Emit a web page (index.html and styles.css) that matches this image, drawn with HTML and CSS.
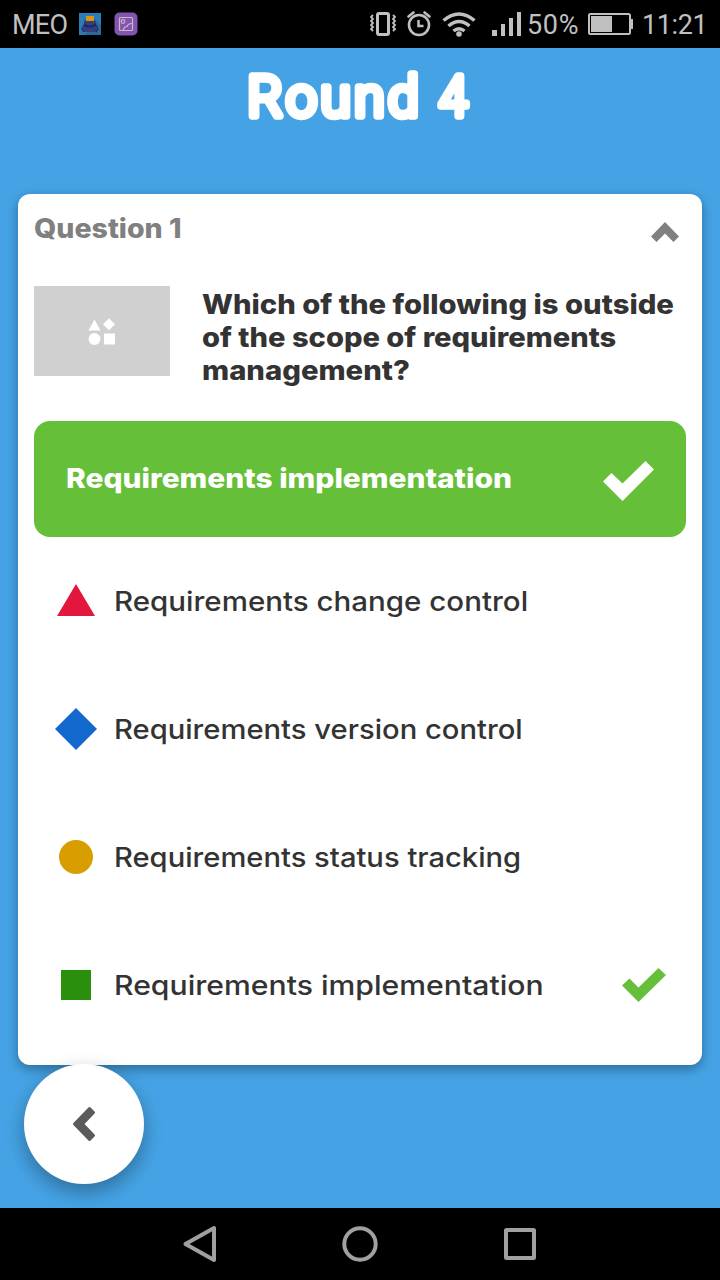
FILE: index.html
```html
<!DOCTYPE html>
<html lang="en">
<head>
<meta charset="utf-8">
<title>Round 4</title>
<link rel="stylesheet" href="styles.css">
</head>
<body>
<div class="phone">
  <header class="status-bar">
    <span class="carrier">MEO</span>
    <svg class="app-icon" width="22" height="22" viewBox="0 0 22 22"><path fill="#2b7db7" d="M0 0h22v22H0z"/><path fill="#286b9c" d="M17 7l5 5v10H6z"/><path fill="#343f7e" d="M5 10q0-5 6-5t6 5l1 9H4z"/><path fill="#d99612" d="M7 3h8v5H7z"/><path fill="#20285f" d="M5 10q6 5 12 0v3q-6 3-12 0z"/><path fill="none" stroke="#27306c" stroke-width="1.4" d="M5 12l-2 4 2 3m12-7 2 4-2 3"/></svg>
    <svg class="gallery-icon" width="24" height="24" viewBox="0 0 24 24"><rect x=".5" y=".5" width="23" height="23" rx="5" fill="#8455af"/><g fill="none" stroke="#c9b6cf" stroke-width="1.2"><rect x="5.500" y="5.500" width="13" height="13" rx="1"/><circle cx="9" cy="9.500" r="1.800"/><path d="M9 18.500q1-4 4-4 1-3 5-3"/></g></svg>
    <svg class="signals" width="152" height="32" viewBox="370 8 152 32" fill="none" stroke="#c0c0c0">
      <rect x="377.500" y="13.500" width="11" height="21" rx="1.500" stroke-width="3"/>
      <path stroke-width="1.800" d="M373 15l-2 2 2 2-2 2 2 2-2 2 2 2-2 2 2 2M393 15l2 2-2 2 2 2-2 2 2 2-2 2 2 2-2 2"/>
      <circle cx="419" cy="25" r="10" stroke-width="2.600"/>
      <path stroke-width="2.500" d="M418.500 20v6h5"/>
      <path stroke-width="2.600" stroke-linecap="round" d="M408.500 16.500l5-4M429.500 16.500l-5-4"/>
      <path stroke-width="3.500" d="M443.500 20.500q15.500-13 31 0M448.500 26q10.500-9 21 0M453.500 31q5.500-4.500 11 0"/>
      <circle cx="459" cy="34" r="2.800" fill="#c0c0c0" stroke="none"/>
      <path fill="#c0c0c0" stroke="none" d="M492 30h5v6h-5zM501 24h4v12h-4zM509 18h4v18h-4zM517 12h4v24h-4z"/>
    </svg>
    <span class="percent">50%</span>
    <svg class="battery" width="46" height="22" viewBox="0 0 46 22"><rect x="1" y="1" width="41" height="20" rx="1.500" fill="none" stroke="#c0c0c0" stroke-width="2"/><path fill="#c0c0c0" d="M3 3h21v16H3zM42 6h3v10h-3z"/></svg>
    <span class="clock">11:21</span>
  </header>

  <main class="screen">
    <svg class="round-title" width="240" height="84" viewBox="240 52 240 84" role="heading" aria-label="Round 4"><text x="247.500" y="115.500" textLength="171" lengthAdjust="spacing">Round</text><text x="439" y="115.500" textLength="28.500" lengthAdjust="spacingAndGlyphs">4</text></svg>
    <section class="card">
      <div class="card-head">
        <h2 class="question-number">Question 1</h2>
        <svg class="collapse" width="28" height="20" viewBox="0 0 28 20"><path fill="#808080" d="M14 0l14 14.500-5.500 5.500-8.500-8.500L5.500 20 0 14.500z"/></svg>
      </div>
      <div class="question">
        <div class="thumb"><svg width="28" height="28" viewBox="0 0 28 28" fill="#fff"><path d="M6.500 1.500l6 11H.5zM21 .300l6 6-6 6-6-6zM16 15.500h11v11H16z"/><circle cx="6.500" cy="21" r="5.900"/></svg></div>
        <p class="prompt"><span class="l1">Which of the following is outside</span><br><span class="l2">of the scope of requirements</span><br><span class="l3">management?</span></p>
      </div>
      <div class="selected">
        <span>Requirements implementation</span>
        <svg width="51" height="42" viewBox="0 -1 51 42"><path fill="#fff" d="M0 20.500L8.500 12 19.500 22.500 42.500 0 51 8.500 19.500 40z"/></svg>
      </div>
      <ul class="answers">
        <li class="answer"><svg class="shape" width="44" height="44" viewBox="0 0 44 44"><path fill="#e3173e" d="M22 5l19 32H3z"/></svg><span class="a1">Requirements change control</span></li>
        <li class="answer"><svg class="shape" width="44" height="44" viewBox="0 0 44 44"><path fill="#1368ce" d="M22 1l21 21-21 21L1 22z"/></svg><span class="a2">Requirements version control</span></li>
        <li class="answer"><svg class="shape" width="44" height="44" viewBox="0 0 44 44"><circle cx="22" cy="22" r="17" fill="#d89e00"/></svg><span class="a3">Requirements status tracking</span></li>
        <li class="answer"><svg class="shape" width="44" height="44" viewBox="0 0 44 44"><path fill="#298f0d" d="M7 7h30v30H7z"/></svg><span class="a4">Requirements implementation</span><svg class="correct" width="44" height="34" viewBox="0 0 44 34"><path fill="#66bf39" d="M0 17.500L7.500 10.500 16.500 19.500 36.500 0 44 7 16.500 34z"/></svg></li>
      </ul>
    </section>
    <button class="back" aria-label="Back"><svg width="24" height="36" viewBox="0 0 24 36"><path fill="#5b5b5b" stroke="#5b5b5b" stroke-width="3" stroke-linejoin="round" d="M17.500 2.500l4 4L10.500 18l11 11.500-4 4L2.500 18z"/></svg></button>
  </main>

  <nav class="nav-bar">
    <svg width="36" height="40" viewBox="0 0 36 40"><path d="M32 4v32L3.500 20z"/></svg>
    <svg width="36" height="40" viewBox="0 0 36 40"><circle cx="18" cy="20" r="15.700"/></svg>
    <svg width="36" height="40" viewBox="0 0 36 40"><rect x="4" y="6" width="28" height="28" rx=".5"/></svg>
  </nav>
</div>
</body>
</html>
```
FILE: styles.css
```css
* { box-sizing: border-box; }
body { margin: 0; font-family: Inter, "Liberation Sans", sans-serif; }
.phone { width: 720px; height: 1280px; display: flex; flex-direction: column; overflow: hidden; background: #45a3e5; }
.status-bar { height: 48px; flex: none; display: flex; align-items: center; background: #000; color: #c0c0c0; padding-left: 12px; font: 27px/48px Roboto, sans-serif; white-space: nowrap; }
.status-bar > * { flex: none; }
.status-bar span { padding-top: 2px; }
.carrier { width: 67px; letter-spacing: -.7px; }
.gallery-icon { margin-left: 13px; }
.signals { margin-left: 232px; }
.percent { width: 61px; margin-left: 5px; letter-spacing: .7px; }
.battery { margin-left: 0; }
.clock { margin-left: 8px; letter-spacing: -.4px; }
.screen { height: 1160px; flex: none; display: flex; flex-direction: column; align-items: center; }
.round-title { margin: 4px 0 58px; flex: none; }
.round-title text { font: 300 55px Roboto, sans-serif; fill: #fff; stroke: #fff; stroke-width: 7.500px; stroke-linejoin: round; stroke-linecap: round; }
.card { width: 684px; height: 871px; flex: none; border-radius: 12px; background: #fff; padding: 0 16px; box-shadow: 0 4px 12px rgba(0, 0, 0, .35); color: #333; }
.card-head { height: 92px; display: flex; justify-content: space-between; padding: 18px 7.500px 0 0; }
.question-number { margin: 0; font-size: 27px; line-height: 33px; font-weight: 800; color: #808080; white-space: nowrap; transform: scaleX(1.057); transform-origin: left; }
.collapse { margin-top: 10px; }
.question { height: 135px; display: flex; gap: 32px; align-items: flex-start; }
.thumb { width: 136px; height: 90px; flex: none; display: flex; align-items: center; justify-content: center; background: #d0d0d0; }
.thumb svg { position: relative; top: .5px; }
.prompt { margin: 2px 0 0; font-size: 27px; line-height: 33px; font-weight: 800; white-space: nowrap; }
.prompt span, .selected span, .answer span { display: inline-block; transform-origin: left; }
.l1 { transform: scaleX(1.083); }
.l2 { transform: scaleX(1.078); }
.l3 { transform: scaleX(1.084); }
.selected { height: 116px; display: flex; align-items: center; justify-content: space-between; padding: 3px 32px 0; border-radius: 16px; background: #66bf39; color: #fff; font-size: 27px; font-weight: 800; white-space: nowrap; }
.selected span { transform: scaleX(1.107); padding-bottom: 4px; }
.answers { list-style: none; margin: 0; padding: 0; }
.answer { height: 128px; display: flex; align-items: center; padding: 0 20px; font-size: 27px; font-weight: 500; white-space: nowrap; }
.a1 { transform: scaleX(1.093); }
.a2 { transform: scaleX(1.081); }
.a3 { transform: scaleX(1.08); }
.a4 { transform: scaleX(1.117); }
.shape { margin-right: 16px; }
.correct { margin-left: auto; }
.back { width: 120px; height: 120px; flex: none; align-self: flex-start; margin: -1px 0 0 24px; padding: 0; border: 0; border-radius: 50%; background: #fff; box-shadow: 0 8px 20px rgba(0, 0, 0, .32); display: flex; align-items: center; justify-content: center; }
.nav-bar { height: 72px; flex: none; display: flex; align-items: center; justify-content: center; gap: 124px; background: #000; }
.nav-bar svg { fill: none; stroke: #a0a0a0; stroke-width: 4; stroke-linejoin: round; }
```
